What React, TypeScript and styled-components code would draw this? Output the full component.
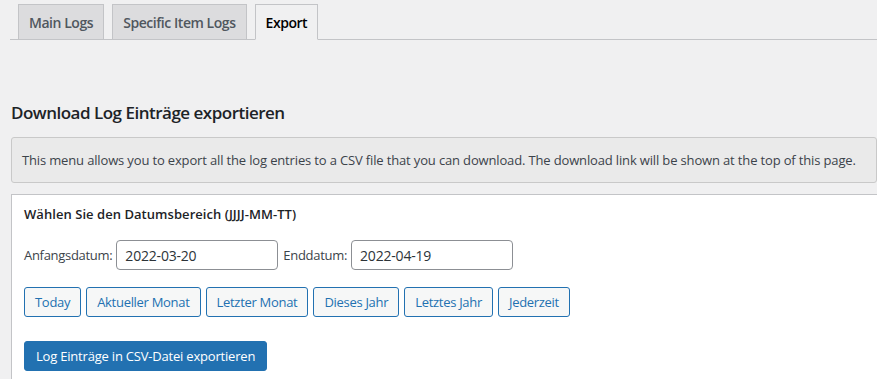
import styled, { createGlobalStyle } from "styled-components";

const GlobalStyle = createGlobalStyle`
  html, body {
    margin: 0;
    padding: 0;
    background: #f0f0f1;
    font-family: "Open Sans", "Noto Sans", sans-serif;
    color: #3c434a;
    overflow: hidden;
  }
`;

const Page = styled.div`
  padding: 4px 0 0 10px;
  width: 877px;
  height: 379px;
  overflow: hidden;
  box-sizing: border-box;
`;

const TabBar = styled.nav`
  display: flex;
  gap: 8px;
  padding-left: 8px;
  border-bottom: 1px solid #c3c4c7;
  height: 35px;
  box-sizing: content-box;
`;

const Tab = styled.a<{ $active?: boolean }>`
  display: flex;
  align-items: center;
  padding: 0 10px;
  box-sizing: border-box;
  border: 1px solid #c3c4c7;
  border-bottom: ${(p) => (p.$active ? "1px solid #f0f0f1" : "none")};
  margin-bottom: ${(p) => (p.$active ? "-1px" : "0")};
  height: ${(p) => (p.$active ? "36px" : "35px")};
  background: ${(p) => (p.$active ? "#f0f0f1" : "#dcdcde")};
  color: ${(p) => (p.$active ? "#000" : "#50575e")};
  font-size: 14px;
  font-weight: 600;
  text-decoration: none;
  letter-spacing: -0.45px;
`;

const Heading = styled.h2`
  margin: 61px 0 0 1px;
  font-size: 17px;
  font-weight: 600;
  color: #1d2327;
  line-height: 24px;
  letter-spacing: -0.5px;
`;

const Notice = styled.div`
  margin: 12px 0 0 1px;
  background: #eaeaea;
  border: 1px solid #c9c9c9;
  border-radius: 3px;
  padding: 0 10px;
  height: 46px;
  box-sizing: border-box;
  display: flex;
  align-items: center;
  font-size: 13px;
  color: #3c434a;
  white-space: nowrap;
  letter-spacing: -0.15px;
`;

const Panel = styled.div`
  margin: 11px 0 0 1px;
  background: #fff;
  border: 1px solid #c3c4c7;
  border-right: none;
  padding: 10px 12px 20px;
  height: 200px;
`;

const PanelTitle = styled.div`
  font-size: 13px;
  font-weight: 600;
  color: #1d2327;
  line-height: 18px;
  letter-spacing: 0.05px;
`;

const DateRow = styled.div`
  display: flex;
  align-items: center;
  margin-top: 17px;
  gap: 4px;
`;

const Label = styled.label`
  font-size: 13px;
  color: #3c434a;
  letter-spacing: -0.3px;
`;

const DateInput = styled.input`
  width: 162px;
  height: 30px;
  box-sizing: border-box;
  border: 1px solid #8c8f94;
  border-radius: 4px;
  padding: 0 8px;
  font-family: inherit;
  font-size: 14px;
  color: #2c3338;
  margin-right: 1px;
  letter-spacing: -0.2px;
`;

const Presets = styled.div`
  display: flex;
  gap: 5px;
  margin-top: 17px;
`;

const RangeButton = styled.button`
  height: 30px;
  padding: 0 10px;
  border: 1px solid #2271b1;
  border-radius: 3px;
  background: #f6f7f7;
  color: #2271b1;
  font-family: inherit;
  font-size: 13px;
  letter-spacing: -0.3px;
  cursor: pointer;
`;

const PrimaryButton = styled.button`
  margin-top: 24px;
  height: 30px;
  padding: 0 11px;
  border: 1px solid #2271b1;
  border-radius: 3px;
  background: #2271b1;
  color: #fff;
  font-family: inherit;
  font-size: 13px;
  letter-spacing: -0.2px;
  cursor: pointer;
`;

const presets = ["Today", "Aktueller Monat", "Letzter Monat", "Dieses Jahr", "Letztes Jahr", "Jederzeit"];

export default function App() {
  return (
    <>
      <GlobalStyle />
      <Page>
        <TabBar>
          <Tab href="#">Main Logs</Tab>
          <Tab href="#">Specific Item Logs</Tab>
          <Tab href="#" $active>Export</Tab>
        </TabBar>
        <Heading>Download Log Einträge exportieren</Heading>
        <Notice>
          This menu allows you to export all the log entries to a CSV file that you can download. The download link will be shown at the top of this page.
        </Notice>
        <Panel>
          <PanelTitle>Wählen Sie den Datumsbereich (JJJJ-MM-TT)</PanelTitle>
          <DateRow>
            <Label>Anfangsdatum:</Label>
            <DateInput defaultValue="2022-03-20" />
            <Label>Enddatum:</Label>
            <DateInput defaultValue="2022-04-19" />
          </DateRow>
          <Presets>
            {presets.map((p) => (
              <RangeButton key={p}>{p}</RangeButton>
            ))}
          </Presets>
          <PrimaryButton>Log Einträge in CSV-Datei exportieren</PrimaryButton>
        </Panel>
      </Page>
    </>
  );
}
